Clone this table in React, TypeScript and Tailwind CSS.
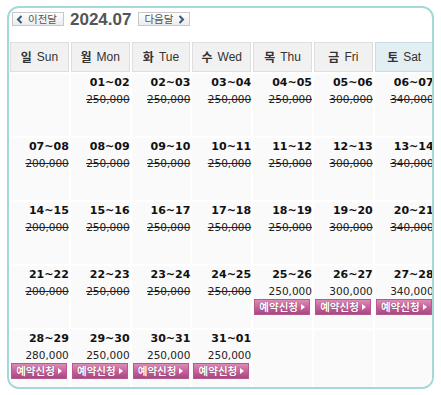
import React from 'react';

type Day = { range: string; price: string; open?: boolean } | null;

const weeks: Day[][] = [
  [
    null,
    { range: '01~02', price: '250,000' },
    { range: '02~03', price: '250,000' },
    { range: '03~04', price: '250,000' },
    { range: '04~05', price: '250,000' },
    { range: '05~06', price: '300,000' },
    { range: '06~07', price: '340,000' },
  ],
  [
    { range: '07~08', price: '200,000' },
    { range: '08~09', price: '250,000' },
    { range: '09~10', price: '250,000' },
    { range: '10~11', price: '250,000' },
    { range: '11~12', price: '250,000' },
    { range: '12~13', price: '300,000' },
    { range: '13~14', price: '340,000' },
  ],
  [
    { range: '14~15', price: '200,000' },
    { range: '15~16', price: '250,000' },
    { range: '16~17', price: '250,000' },
    { range: '17~18', price: '250,000' },
    { range: '18~19', price: '250,000' },
    { range: '19~20', price: '300,000' },
    { range: '20~21', price: '340,000' },
  ],
  [
    { range: '21~22', price: '200,000' },
    { range: '22~23', price: '250,000' },
    { range: '23~24', price: '250,000' },
    { range: '24~25', price: '250,000' },
    { range: '25~26', price: '250,000', open: true },
    { range: '26~27', price: '300,000', open: true },
    { range: '27~28', price: '340,000', open: true },
  ],
  [
    { range: '28~29', price: '280,000', open: true },
    { range: '29~30', price: '250,000', open: true },
    { range: '30~31', price: '250,000', open: true },
    { range: '31~01', price: '250,000', open: true },
    null,
    null,
    null,
  ],
];

const heads = [
  ['일', 'Sun'],
  ['월', 'Mon'],
  ['화', 'Tue'],
  ['수', 'Wed'],
  ['목', 'Thu'],
  ['금', 'Fri'],
  ['토', 'Sat'],
];

const ko = "font-['Noto_Sans_CJK_KR',sans-serif]";

const NavButton: React.FC<{ label: string; dir: 'prev' | 'next' }> = ({ label, dir }) => (
  <button className="flex items-center gap-[3px] h-[14px] pl-[3px] pr-[4px] border border-[#c8c8c8] bg-linear-to-b from-white to-[#ececec] text-[#555]">
    {dir === 'prev' && (
      <svg width="7" height="9" viewBox="0 0 7 9"><path d="M5.5 1 L2 4.5 L5.5 8" stroke="#34587a" strokeWidth="2" fill="none" /></svg>
    )}
    <span className={`${ko} text-[10.5px] leading-none px-[2px]`}>{label}</span>
    {dir === 'next' && (
      <svg width="7" height="9" viewBox="0 0 7 9"><path d="M1.5 1 L5 4.5 L1.5 8" stroke="#34587a" strokeWidth="2" fill="none" /></svg>
    )}
  </button>
);

// pink "book now" button
const BookButton = () => (
  <button className="flex items-center justify-center gap-[3px] w-[56px] h-[16px] border border-[#b45a8d] bg-linear-to-b from-[#dc8bb8] via-[#c8629e] to-[#a94880]">
    <span className={`${ko} text-[10.5px] font-bold leading-none text-white [text-shadow:0_0_1px_#6e1d4a]`}>예약신청</span>
    <span className="w-0 h-0 border-y-[3.5px] border-y-transparent border-l-[4px] border-l-white" />
  </button>
);

export default function App() {
  return (
    <div className="w-[441px] h-[395px] bg-white pt-[6px] pl-[7px]">
      <div className="w-[427px] h-[383px] rounded-[12px] border-2 border-[#a6d8d9] overflow-hidden bg-white">
        <div className="flex items-center mt-[4px] ml-[3px] h-[14px]">
          <NavButton label="이전달" dir="prev" />
          <span className="ml-[6px] font-['Liberation_Sans',sans-serif] font-bold text-[17px] text-[#555] leading-none">2024.07</span>
          <span className="ml-[7px]"><NavButton label="다음달" dir="next" /></span>
        </div>

        <div className="mt-[16px] ml-[1px] grid grid-cols-[repeat(7,58.8px)] gap-x-[2px] gap-y-[2px] auto-rows-[62px] grid-rows-[30px]">
          {heads.map(([k, e], i) => (
            <div
              key={e}
              className={`flex items-center justify-center gap-[5px] border ${i === 6 ? 'bg-[#e1eef2] border-[#c6dde4]' : 'bg-[#f1f1f1] border-[#dedede]'} text-[#333]`}
            >
              <span className={`${ko} text-[12px] font-bold`}>{k}</span>
              <span className="font-['Liberation_Sans',sans-serif] text-[12px]">{e}</span>
            </div>
          ))}
          {weeks.flat().map((d, i) => (
            <div key={i} className="bg-[#fafafa] pt-[1px] flex flex-col">
              {d && (
                <>
                  <div className="h-[16px] leading-[16px] text-right font-['DejaVu_Sans',sans-serif] font-bold text-[11px] text-[#111]">
                    {d.range}
                  </div>
                  <div
                    className={`h-[16px] leading-[16px] text-right font-['DejaVu_Sans',sans-serif] text-[10.5px] text-[#222] ${d.open ? '' : 'line-through'}`}
                  >
                    {d.price}
                  </div>
                  {d.open && (
                    <div className="pl-[1px]">
                      <BookButton />
                    </div>
                  )}
                </>
              )}
            </div>
          ))}
        </div>
      </div>
    </div>
  );
}
